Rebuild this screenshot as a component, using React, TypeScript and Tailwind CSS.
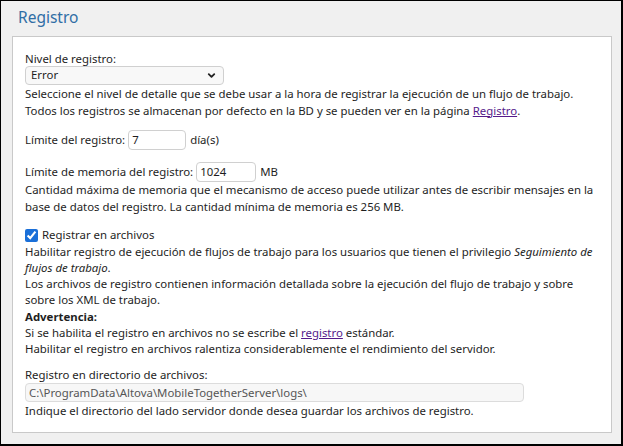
import React from 'react';
import { ChevronDown } from 'lucide-react';

function App() {
  return (
    <div
      className="w-[623px] h-[446px] bg-[#f0f0f0] border-l border-t border-r-2 border-b-2 border-black text-[11.4px] leading-[16.5px] text-[#1e1e1e]"
      style={{ fontFamily: '"Noto Sans", "Open Sans", sans-serif' }}
    >
      <div className="h-[35px] pl-[17px] pt-[5px] text-[15.5px] leading-[22px] text-[#2f6ea5]">Registro</div>

      <div className="ml-[11px] w-[600px] h-[397px] bg-white border border-[#c9c9c9] px-[12px] pt-[14px]">
        {/* nivel */}
        <div className="leading-[16px]">Nivel de registro:</div>
        <div className="mt-[-1px] w-[199px] h-[19px] rounded-[4px] border border-[#d0d0d0] bg-[#f8f8f8] flex items-center justify-between pl-[5px] pr-[6px]">
          <span>Error</span>
          <ChevronDown size={11} strokeWidth={4} className="text-[#222]" />
        </div>
        <div className="mt-[1px] whitespace-nowrap">
          Seleccione el nivel de detalle que se debe usar a la hora de registrar la ejecución de un flujo de trabajo.
          <br />
          Todos los registros se almacenan por defecto en la BD y se pueden ver en la página{' '}
          <a className="text-[#551a8b] underline">Registro</a>.
        </div>

        {/* límite */}
        <div className="mt-[11px] flex items-center">
          <span>Límite del registro:</span>
          <div className="ml-[3px] w-[58px] h-[20px] rounded-[4px] border border-[#d0d0d0] bg-white pl-[3px] leading-[18px]">7</div>
          <span className="ml-[4px]">día(s)</span>
        </div>

        <div className="mt-[12px] flex items-center">
          <span>Límite de memoria del registro:</span>
          <div className="ml-[3px] w-[60px] h-[20px] rounded-[4px] border border-[#d0d0d0] bg-white pl-[3px] leading-[18px]">1024</div>
          <span className="ml-[4px]">MB</span>
        </div>
        <div className="whitespace-nowrap">
          Cantidad máxima de memoria que el mecanismo de acceso puede utilizar antes de escribir mensajes en la
          <br />
          base de datos del registro. La cantidad mínima de memoria es 256 MB.
        </div>

        {/* archivos */}
        <div className="mt-[12px] flex items-center">
          <input type="checkbox" checked readOnly className="m-0 w-[13px] h-[13px] accent-[#1a6fd8]" />
          <span className="ml-[4px]">Registrar en archivos</span>
        </div>
        <div className="whitespace-nowrap leading-[16.3px]">
          Habilitar registro de ejecución de flujos de trabajo para los usuarios que tienen el privilegio{' '}
          <i>Seguimiento de</i>
          <br />
          <i>flujos de trabajo</i>.
          <br />
          Los archivos de registro contienen información detallada sobre la ejecución del flujo de trabajo y sobre
          <br />
          sobre los XML de trabajo.
          <br />
          <b>Advertencia:</b>
          <br />
          Si se habilita el registro en archivos no se escribe el{' '}
          <a className="text-[#551a8b] underline">registro</a> estándar.
          <br />
          Habilitar el registro en archivos ralentiza considerablemente el rendimiento del servidor.
        </div>

        {/* directorio */}
        <div className="mt-[9px] leading-[16px]">Registro en directorio de archivos:</div>
        <div className="w-[499px] h-[19px] rounded-[4px] border border-[#dcdcdc] bg-[#f7f7f7] pl-[3px] leading-[17px] text-[#555]">
          C:\ProgramData\Altova\MobileTogetherServer\logs\
        </div>
        <div className="mt-[1px]">Indique el directorio del lado servidor donde desea guardar los archivos de registro.</div>
      </div>
    </div>
  );
}

export default App;
